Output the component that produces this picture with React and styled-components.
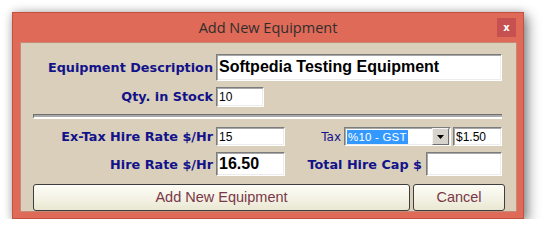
import React from 'react';
import styled, { createGlobalStyle } from 'styled-components';

const GlobalStyle = createGlobalStyle`
  html, body {
    margin: 0;
    padding: 0;
    background: #ffffff;
  }
  * {
    box-sizing: border-box;
  }
`;

const Window = styled.div`
  margin: 12px 0 0 12px;
  width: 512px;
  height: 207px;
  background-color: #df6a57;
  border: 1px solid #c0523f;
  box-shadow: 4px 4px 12px rgba(0, 0, 0, 0.45), 0 0 8px rgba(0, 0, 0, 0.18);
  display: flex;
  flex-direction: column;
`;

const TitleBar = styled.div`
  height: 29px;
  display: grid;
  grid-template-columns: 1fr auto 1fr;
  align-items: start;
`;

const Title = styled.div`
  grid-column: 2;
  font-family: 'Open Sans', 'Noto Sans', sans-serif;
  font-size: 14.5px;
  line-height: 29px;
  color: #2e2e2e;
`;

const CloseButton = styled.button`
  grid-column: 3;
  justify-self: end;
  margin: 5px 7px 0 0;
  width: 19px;
  height: 19px;
  padding: 0;
  border: none;
  background-color: #c75050;
  color: #ffffff;
  font-family: 'DejaVu Sans', sans-serif;
  font-weight: bold;
  font-size: 10px;
  line-height: 19px;
  cursor: pointer;
`;

const Client = styled.div`
  flex: 1;
  margin: 0 6px 6px 7px;
  background-color: #d9cfba;
  border: 1px solid #c58a77;
  padding: 11px 14px 0 0;
  display: flex;
  flex-direction: column;
  overflow: hidden;
`;

const Row = styled.div`
  display: flex;
  align-items: center;
  height: ${(p) => p.$h}px;
  margin-bottom: ${(p) => p.$gap || 0}px;
`;

const Label = styled.label`
  width: 195px;
  flex: none;
  padding-right: 3px;
  text-align: right;
  font-family: 'DejaVu Sans', Verdana, sans-serif;
  font-weight: bold;
  font-size: 12.8px;
  color: #12128a;
  white-space: nowrap;
`;

const SideLabel = styled.label`
  margin-left: auto;
  margin-right: ${(p) => p.$gap}px;
  font-family: 'DejaVu Sans', Verdana, sans-serif;
  font-weight: ${(p) => (p.$bold ? 'bold' : 'normal')};
  font-size: ${(p) => (p.$bold ? '12.8px' : '12px')};
  color: #12128a;
  white-space: nowrap;
`;

const Field = styled.input`
  width: ${(p) => (p.$w ? `${p.$w}px` : 'auto')};
  flex: ${(p) => (p.$w ? 'none' : '1')};
  height: 100%;
  min-width: 0;
  margin: 0;
  padding: 0 2px;
  border: 1px solid;
  border-color: #7c7c7c #ffffff #ffffff #7c7c7c;
  box-shadow: inset 1px 1px 0 #a8a8a8, inset -1px -1px 0 #ececec;
  background: #ffffff;
  color: #000000;
  font-family: 'Liberation Sans', Arial, sans-serif;
  font-weight: ${(p) => (p.$big ? 'bold' : 'normal')};
  font-size: ${(p) => (p.$big ? '16px' : '12px')};
  outline: none;
`;

const Combo = styled.div`
  width: 107px;
  height: 100%;
  margin-right: 2px;
  display: flex;
  align-items: center;
  padding: 0 1px 0 2px;
  border: 1px solid;
  border-color: #7c7c7c #ffffff #ffffff #7c7c7c;
  box-shadow: inset 1px 1px 0 #a8a8a8, inset -1px -1px 0 #ececec;
  background: #ffffff;
`;

const ComboText = styled.span`
  background-color: #3399ff;
  color: #ffffff;
  font-family: 'Liberation Sans', Arial, sans-serif;
  font-size: 11.5px;
  letter-spacing: 0.2px;
  line-height: 14px;
  padding: 0 1px;
  white-space: nowrap;
`;

const ComboArrow = styled.span`
  margin-left: auto;
  width: 17px;
  height: 17px;
  display: flex;
  align-items: center;
  justify-content: center;
  background-color: #d6d3cc;
  border: 1px solid;
  border-color: #f4f4f4 #6f6f6f #6f6f6f #f4f4f4;
`;

const Separator = styled.div`
  margin: 0 0 8px 12px;
  height: 5px;
  border-top: 1px solid #6f6f6f;
  border-left: 1px solid #6f6f6f;
  border-bottom: 2px solid #ffffff;
  background-color: #a9a9a9;
`;

const ButtonRow = styled.div`
  display: flex;
  gap: 3px;
  margin: 0 -3px 0 12px;
  height: 27px;
`;

const Button = styled.button`
  width: ${(p) => p.$w}px;
  height: 100%;
  border: 1px solid #3e3e3e;
  border-radius: 3px;
  background: linear-gradient(#fdfdf6, #f4f3e6 50%, #eae8d2);
  color: #7a3848;
  font-family: 'Liberation Sans', Arial, sans-serif;
  font-size: 14.5px;
  padding: 0 0 2px;
  cursor: pointer;
`;

export default function App() {
  return (
    <>
      <GlobalStyle />
      <Window>
        <TitleBar>
          <Title>Add New Equipment</Title>
          <CloseButton>x</CloseButton>
        </TitleBar>
        <Client>
          <Row $h={27} $gap={6}>
            <Label>Equipment Description</Label>
            <Field $big readOnly value="Softpedia Testing Equipment" />
          </Row>
          <Row $h={20} $gap={7}>
            <Label>Qty. in Stock</Label>
            <Field $w={48} readOnly value="10" />
          </Row>
          <Separator />
          <Row $h={20} $gap={6}>
            <Label>Ex-Tax Hire Rate $/Hr</Label>
            <Field $w={69} readOnly value="15" />
            <SideLabel $gap={3}>Tax</SideLabel>
            <Combo>
              <ComboText>%10 - GST</ComboText>
              <ComboArrow>
                <svg width="7" height="4" viewBox="0 0 7 4">
                  <path d="M0 0h7L3.5 4z" fill="#000" />
                </svg>
              </ComboArrow>
            </Combo>
            <Field $w={49} readOnly value="$1.50" />
          </Row>
          <Row $h={24} $gap={8}>
            <Label>Hire Rate $/Hr</Label>
            <Field $w={69} $big readOnly value="16.50" />
            <SideLabel $bold $gap={4}>Total Hire Cap $</SideLabel>
            <Field $w={76} readOnly value="" />
          </Row>
          <ButtonRow>
            <Button $w={377}>Add New Equipment</Button>
            <Button $w={92}>Cancel</Button>
          </ButtonRow>
        </Client>
      </Window>
    </>
  );
}
